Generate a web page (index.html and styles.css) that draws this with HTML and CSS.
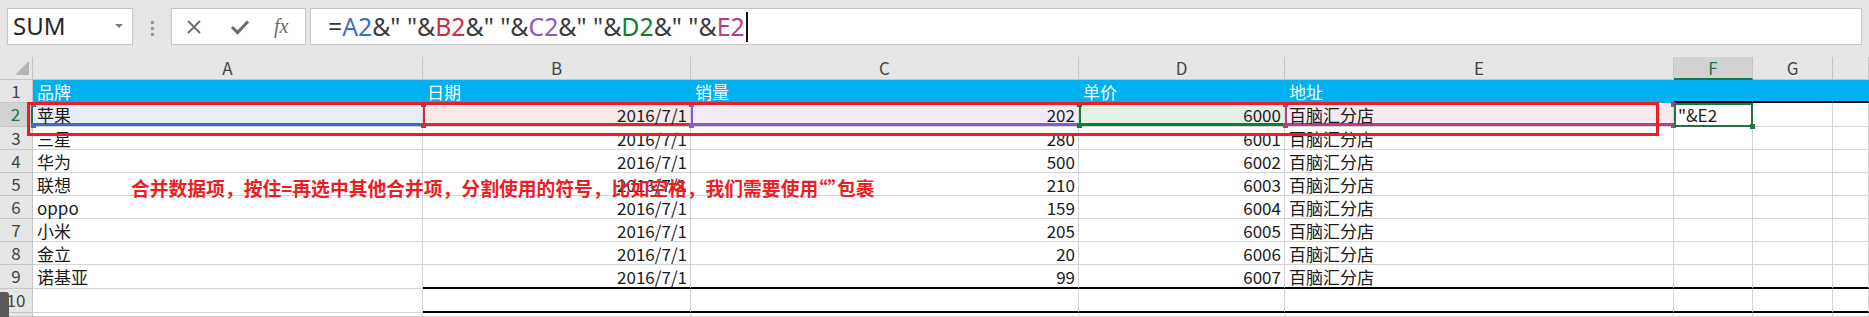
FILE: index.html
```html
<!DOCTYPE html>
<html>
<head>
    <title>Sheet - formula edit</title>
    <link rel="stylesheet" href="styles.css">
</head>
<body>
    <div class="topbar">
        <div class="namebox">SUM<span class="caret"></span></div>
        <div class="grip"><i></i><i></i><i></i></div>
        <div class="fxbox">
            <svg class="ico" width="16" height="16" viewBox="0 0 16 16"><path d="M2 2 L14 14 M14 2 L2 14" stroke="#6b6b6b" stroke-width="1.8" fill="none"/></svg>
            <svg class="ico" width="20" height="16" viewBox="0 0 20 16"><path d="M2 8 L7.5 13.5 L18 2.5" stroke="#6b6b6b" stroke-width="3" fill="none"/></svg>
            <span class="fx">fx</span>
        </div>
        <div class="formula">
            <span>=</span><span class="c-a">A2</span><span>&amp;" "&amp;</span><span class="c-b">B2</span><span>&amp;" "&amp;</span><span class="c-c">C2</span><span>&amp;" "&amp;</span><span class="c-d">D2</span><span>&amp;" "&amp;</span><span class="c-e">E2</span><span class="cursor"></span>
        </div>
    </div>

    <div class="sheet">
        <!-- column headers -->
        <div class="hd corner"><svg width="16" height="16" viewBox="0 0 16 16"><path d="M15 1 L15 15 L1 15 Z" fill="#b5b5b5"/></svg></div>
        <div class="hd col">A</div>
        <div class="hd col">B</div>
        <div class="hd col">C</div>
        <div class="hd col">D</div>
        <div class="hd col">E</div>
        <div class="hd col sel-col">F</div>
        <div class="hd col">G</div>
        <div class="hd col"></div>

        <!-- row 1 -->
        <div class="hd row">1</div>
        <div class="c head">品牌</div>
        <div class="c head">日期</div>
        <div class="c head">销量</div>
        <div class="c head">单价</div>
        <div class="c head">地址</div>
        <div class="c head thick-b"></div>
        <div class="c head thick-b"></div>
        <div class="c head thick-b"></div>

        <!-- row 2 -->
        <div class="hd row sel-row">2</div>
        <div class="c ref ref-a">苹果<i class="h tl"></i><i class="h bl"></i></div>
        <div class="c n ref ref-b">2016/7/1<i class="h tl"></i><i class="h bl"></i></div>
        <div class="c n ref ref-c">202<i class="h tl"></i><i class="h bl"></i></div>
        <div class="c n ref ref-d">6000<i class="h tl"></i><i class="h bl"></i></div>
        <div class="c ref ref-e">百脑汇分店<i class="h tl"></i><i class="h bl"></i><i class="h tr"></i><i class="h br"></i></div>
        <div class="c active">"&amp;E2<i class="h br"></i></div>
        <div class="c"></div>
        <div class="c"></div>

        <div class="hd row">3</div>
        <div class="c">三星</div><div class="c n">2016/7/1</div><div class="c n">280</div><div class="c n">6001</div><div class="c">百脑汇分店</div><div class="c"></div><div class="c"></div><div class="c"></div>

        <div class="hd row">4</div>
        <div class="c">华为</div><div class="c n">2016/7/1</div><div class="c n">500</div><div class="c n">6002</div><div class="c">百脑汇分店</div><div class="c"></div><div class="c"></div><div class="c"></div>

        <div class="hd row">5</div>
        <div class="c">联想</div><div class="c n">2016/7/1</div><div class="c n">210</div><div class="c n">6003</div><div class="c">百脑汇分店</div><div class="c"></div><div class="c"></div><div class="c"></div>

        <div class="hd row">6</div>
        <div class="c">oppo</div><div class="c n">2016/7/1</div><div class="c n">159</div><div class="c n">6004</div><div class="c">百脑汇分店</div><div class="c"></div><div class="c"></div><div class="c"></div>

        <div class="hd row">7</div>
        <div class="c">小米</div><div class="c n">2016/7/1</div><div class="c n">205</div><div class="c n">6005</div><div class="c">百脑汇分店</div><div class="c"></div><div class="c"></div><div class="c"></div>

        <div class="hd row">8</div>
        <div class="c">金立</div><div class="c n">2016/7/1</div><div class="c n">20</div><div class="c n">6006</div><div class="c">百脑汇分店</div><div class="c"></div><div class="c"></div><div class="c"></div>

        <div class="hd row">9</div>
        <div class="c">诺基亚</div><div class="c n thick-b">2016/7/1</div><div class="c n thick-b">99</div><div class="c n thick-b">6007</div><div class="c thick-b">百脑汇分店</div><div class="c thick-b"></div><div class="c thick-b"></div><div class="c thick-b"></div>

        <div class="hd row">10</div>
        <div class="c"></div><div class="c thick-b"></div><div class="c thick-b"></div><div class="c thick-b"></div><div class="c thick-b"></div><div class="c thick-b"></div><div class="c thick-b"></div><div class="c thick-b"></div>

        <div class="hd row"></div>
        <div class="c"></div><div class="c"></div><div class="c"></div><div class="c"></div><div class="c"></div><div class="c"></div><div class="c"></div><div class="c"></div>

        <!-- annotation drawn over the sheet -->
        <div class="mark-box"></div>
        <div class="mark-text">合并数据项，按住=再选中其他合并项，分割使用的符号，比如空格，我们需要使用<span class="q">“”</span>包裹</div>
        <div class="scroll-thumb"></div>
    </div>
</body>
</html>
```

FILE: styles.css
```css
body {
    margin: 0;
    background: #e6e6e6;
    font-family: "Noto Sans CJK SC", "Noto Sans", sans-serif;
    overflow: hidden;
}
.topbar {
    display: flex;
    align-items: flex-start;
    height: 57px;
    box-sizing: border-box;
    padding: 8px 7px 0 7px;
}
.namebox {
    position: relative;
    width: 126px;
    height: 37px;
    box-sizing: border-box;
    background: #fff;
    border: 1px solid #c6c6c6;
    font-family: "Noto Sans", sans-serif;
    font-size: 24px;
    line-height: 34px;
    padding-left: 5px;
    color: #262626;
}
.caret {
    position: absolute;
    right: 9px;
    top: 15px;
    border-left: 4px solid transparent;
    border-right: 4px solid transparent;
    border-top: 4px solid #7a7a7a;
}
.grip {
    width: 38px;
    display: flex;
    flex-direction: column;
    align-items: center;
    gap: 3px;
    padding-top: 13px;
}
.grip i {
    width: 3px;
    height: 3px;
    background: #9a9a9a;
}
.fxbox {
    width: 135px;
    height: 37px;
    box-sizing: border-box;
    background: #fff;
    border: 1px solid #c6c6c6;
    display: flex;
    align-items: center;
    padding-left: 14px;
    gap: 28px;
}
.fx {
    font-family: "Liberation Serif", serif;
    font-style: italic;
    font-size: 20px;
    color: #6b6b6b;
    margin-left: -4px;
}
.formula {
    flex: 1;
    margin-left: 4px;
    height: 37px;
    box-sizing: border-box;
    background: #fff;
    border: 1px solid #c6c6c6;
    font-family: "Noto Sans", sans-serif;
    font-size: 24.8px;
    line-height: 33px;
    padding-left: 17px;
    color: #3a3a3a;
    white-space: pre;
    display: flex;
    align-items: center;
}
.c-a { color: #3b6fc6; }
.c-b { color: #c8323a; }
.c-c { color: #8c5ac8; }
.c-d { color: #0d8030; }
.c-e { color: #b83d88; }
.cursor {
    width: 2px;
    height: 30px;
    background: #111;
    margin-left: 1px;
}

.sheet {
    position: relative;
    display: grid;
    grid-template-columns: 33px 390px 268px 388px 206px 389px 79px 80px 1fr;
    grid-template-rows: 23px 23px 24px 23px 23px 23px 23px 23px 23px 24px 24px 1fr;
    height: 260px;
    background: #fff;
    font-size: 17px;
    color: #1a1a1a;
}
.hd {
    background: #e6e6e6;
    border-right: 1px solid #c6c6c6;
    border-bottom: 1px solid #c6c6c6;
    box-sizing: border-box;
    color: #444;
    text-align: center;
    line-height: 22px;
}
.corner {
    display: flex;
    align-items: flex-end;
    justify-content: flex-end;
    padding: 0 2px 3px 0;
}
.sel-col {
    background: #d2d2d2;
    color: #217346;
    border-bottom: 2px solid #217346;
}
.sel-row {
    background: #d2d2d2;
    color: #217346;
    border-right: 2px solid #217346;
}
.c {
    border-right: 1px solid #d4d4d4;
    border-bottom: 1px solid #d4d4d4;
    box-sizing: border-box;
    padding: 1px 3px 0 4px;
    line-height: 22px;
    white-space: nowrap;
}
.n { text-align: right; }
.head {
    background: #00b0f0;
    color: #fff;
    border-right-color: #00b0f0;
    border-bottom-color: #00b0f0;
}
.head.thick-b { border-bottom: 2px solid #000; }
.thick-b { border-bottom: 2px solid #000; }

/* formula range highlights */
.ref { position: relative; }
.ref-a { background: #e8eef8; box-shadow: inset 0 1px 0 #3b6fc6, inset 0 -3px 0 #3b6fc6; color: #1a1a1a; }
.ref-b { background: #f8e9e9; box-shadow: inset 2px 0 0 #c8323a, inset 0 -3px 0 #c8323a; }
.ref-c { background: #f1ecf7; box-shadow: inset 2px 0 0 #8c5ac8, inset 0 -3px 0 #8c5ac8; }
.ref-d { background: #e5f0e7; box-shadow: inset 2px 0 0 #0d8030, inset 0 -3px 0 #0d8030; }
.ref-e { background: #f6eaf1; box-shadow: inset 2px 0 0 #b83d88, inset 0 -3px 0 #b83d88; }
.h {
    position: absolute;
    width: 5px;
    height: 5px;
}
.ref-a .h { background: #3b6fc6; }
.ref-b .h { background: #c8323a; }
.ref-c .h { background: #8c5ac8; }
.ref-d .h { background: #0d8030; }
.ref-e .h { background: #b83d88; }
.tl { left: -2px; top: -1px; }
.bl { left: -2px; bottom: -2px; }
.tr { right: -3px; top: -1px; }
.br { right: -3px; bottom: -2px; }

.active {
    position: relative;
    border: 2px solid #217346;
    padding: 0 2px;
    line-height: 20px;
}
.active .h { background: #217346; right: -4px; bottom: -4px; }

.mark-box {
    position: absolute;
    left: 27px;
    top: 45px;
    width: 1632px;
    height: 34px;
    box-sizing: border-box;
    border: 3px solid #ee1c25;
}
.mark-text {
    position: absolute;
    left: 131px;
    top: 119px;
    font-size: 18.8px;
    font-weight: 700;
    line-height: 24px;
    color: #ee1c25;
    white-space: nowrap;
}
.q { font-feature-settings: "halt"; }
.scroll-thumb {
    position: absolute;
    left: 0;
    top: 235px;
    width: 9px;
    height: 28px;
    background: #5a5a5a;
    border-radius: 0 3px 0 0;
}
```
